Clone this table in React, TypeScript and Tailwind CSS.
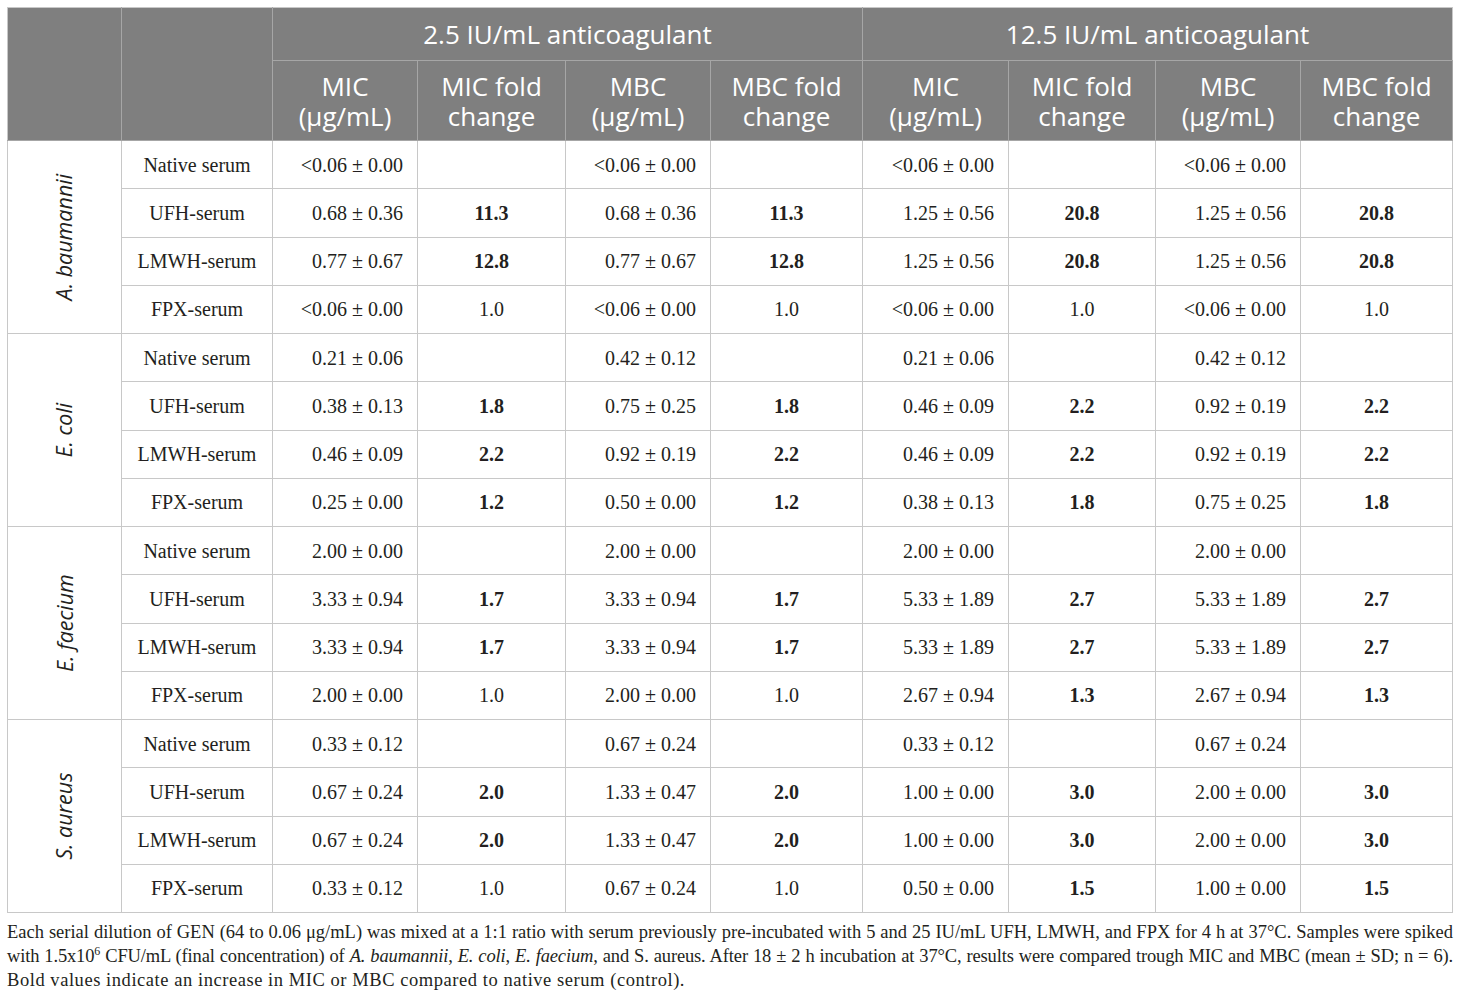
import React from "react"

type Row = { label: string; v: [string, string, string, string, string, string, string, string]; bold: boolean[] }

const GROUPS: { species: string; rows: Row[] }[] = [
  {
    species: "A. baumannii",
    rows: [
      { label: "Native serum", v: ["<0.06 ± 0.00", "", "<0.06 ± 0.00", "", "<0.06 ± 0.00", "", "<0.06 ± 0.00", ""], bold: [false, false, false, false] },
      { label: "UFH-serum", v: ["0.68 ± 0.36", "11.3", "0.68 ± 0.36", "11.3", "1.25 ± 0.56", "20.8", "1.25 ± 0.56", "20.8"], bold: [true, true, true, true] },
      { label: "LMWH-serum", v: ["0.77 ± 0.67", "12.8", "0.77 ± 0.67", "12.8", "1.25 ± 0.56", "20.8", "1.25 ± 0.56", "20.8"], bold: [true, true, true, true] },
      { label: "FPX-serum", v: ["<0.06 ± 0.00", "1.0", "<0.06 ± 0.00", "1.0", "<0.06 ± 0.00", "1.0", "<0.06 ± 0.00", "1.0"], bold: [false, false, false, false] },
    ],
  },
  {
    species: "E. coli",
    rows: [
      { label: "Native serum", v: ["0.21 ± 0.06", "", "0.42 ± 0.12", "", "0.21 ± 0.06", "", "0.42 ± 0.12", ""], bold: [false, false, false, false] },
      { label: "UFH-serum", v: ["0.38 ± 0.13", "1.8", "0.75 ± 0.25", "1.8", "0.46 ± 0.09", "2.2", "0.92 ± 0.19", "2.2"], bold: [true, true, true, true] },
      { label: "LMWH-serum", v: ["0.46 ± 0.09", "2.2", "0.92 ± 0.19", "2.2", "0.46 ± 0.09", "2.2", "0.92 ± 0.19", "2.2"], bold: [true, true, true, true] },
      { label: "FPX-serum", v: ["0.25 ± 0.00", "1.2", "0.50 ± 0.00", "1.2", "0.38 ± 0.13", "1.8", "0.75 ± 0.25", "1.8"], bold: [true, true, true, true] },
    ],
  },
  {
    species: "E. faecium",
    rows: [
      { label: "Native serum", v: ["2.00 ± 0.00", "", "2.00 ± 0.00", "", "2.00 ± 0.00", "", "2.00 ± 0.00", ""], bold: [false, false, false, false] },
      { label: "UFH-serum", v: ["3.33 ± 0.94", "1.7", "3.33 ± 0.94", "1.7", "5.33 ± 1.89", "2.7", "5.33 ± 1.89", "2.7"], bold: [true, true, true, true] },
      { label: "LMWH-serum", v: ["3.33 ± 0.94", "1.7", "3.33 ± 0.94", "1.7", "5.33 ± 1.89", "2.7", "5.33 ± 1.89", "2.7"], bold: [true, true, true, true] },
      { label: "FPX-serum", v: ["2.00 ± 0.00", "1.0", "2.00 ± 0.00", "1.0", "2.67 ± 0.94", "1.3", "2.67 ± 0.94", "1.3"], bold: [false, false, true, true] },
    ],
  },
  {
    species: "S. aureus",
    rows: [
      { label: "Native serum", v: ["0.33 ± 0.12", "", "0.67 ± 0.24", "", "0.33 ± 0.12", "", "0.67 ± 0.24", ""], bold: [false, false, false, false] },
      { label: "UFH-serum", v: ["0.67 ± 0.24", "2.0", "1.33 ± 0.47", "2.0", "1.00 ± 0.00", "3.0", "2.00 ± 0.00", "3.0"], bold: [true, true, true, true] },
      { label: "LMWH-serum", v: ["0.67 ± 0.24", "2.0", "1.33 ± 0.47", "2.0", "1.00 ± 0.00", "3.0", "2.00 ± 0.00", "3.0"], bold: [true, true, true, true] },
      { label: "FPX-serum", v: ["0.33 ± 0.12", "1.0", "0.67 ± 0.24", "1.0", "0.50 ± 0.00", "1.5", "1.00 ± 0.00", "1.5"], bold: [false, false, true, true] },
    ],
  },
]

const COLS = [114, 151, 145, 148, 145, 152, 146, 147, 145, 152]
const SUBHEADS = [
  ["MIC", "(μg/mL)"],
  ["MIC fold", "change"],
  ["MBC", "(μg/mL)"],
  ["MBC fold", "change"],
]

const sans = "font-['Open_Sans','Noto_Sans',sans-serif]"
const serif = "font-['Liberation_Serif','Times_New_Roman',serif]"

export default function App() {
  return (
    <div className="bg-white w-[1460px] h-[1000px] pt-[7px] px-[7px] text-[#231f20]">
      <table className="border-collapse table-fixed w-[1446px]">
        <colgroup>
          {COLS.map((w, i) => (
            <col key={i} style={{ width: w }} />
          ))}
        </colgroup>
        <thead className={`${sans} text-white bg-[#7f7f7f]`}>
          <tr className="h-[53px]">
            <th rowSpan={2} className="border border-[#a6a6a6] border-l-[#c8c8c8] border-t-[#c8c8c8]" />
            <th rowSpan={2} className="border border-[#a6a6a6] border-t-[#c8c8c8]" />
            <th colSpan={4} className="border border-[#a6a6a6] border-t-[#c8c8c8] font-normal text-[26px] leading-[30px]">
              2.5 IU/mL anticoagulant
            </th>
            <th colSpan={4} className="border border-[#a6a6a6] border-t-[#c8c8c8] border-r-[#c8c8c8] font-normal text-[26px] leading-[30px]">
              12.5 IU/mL anticoagulant
            </th>
          </tr>
          <tr className="h-[80px]">
            {[0, 1].flatMap((g) =>
              SUBHEADS.map((s, i) => (
                <th
                  key={`${g}-${i}`}
                  className="border border-[#a6a6a6] font-normal text-[26px] leading-[30px] align-middle whitespace-nowrap"
                >
                  {s[0]}
                  <br />
                  {s[1]}
                </th>
              ))
            )}
          </tr>
        </thead>
        <tbody className={`${serif} text-[20px]`}>
          {GROUPS.map((g) =>
            g.rows.map((r, ri) => (
              <tr key={g.species + r.label} className="h-[48.25px]">
                {ri === 0 && (
                  <td rowSpan={4} className="border border-[#c8c8c8] p-0">
                    <div className="flex items-center justify-center">
                      <span className={`${sans} italic text-[21.5px] whitespace-nowrap -rotate-90 inline-block`}>
                        {g.species}
                      </span>
                    </div>
                  </td>
                )}
                <td className="border border-[#c8c8c8] text-center whitespace-nowrap">{r.label}</td>
                {r.v.map((val, vi) => {
                  const isFold = vi % 2 === 1
                  const b = isFold && r.bold[(vi - 1) / 2]
                  return (
                    <td
                      key={vi}
                      className={`border border-[#c8c8c8] whitespace-nowrap ${isFold ? "text-center" : "text-right pr-[14px]"} ${b ? "font-bold" : ""}`}
                    >
                      {val}
                    </td>
                  )
                })}
              </tr>
            ))
          )}
        </tbody>
      </table>
      <div className={`${serif} text-[18.5px] leading-[24px] mt-[7px] text-[#231f20] w-[1446px]`}>
        <p className="text-justify [text-align-last:justify] whitespace-nowrap">
          Each serial dilution of GEN (64 to 0.06 μg/mL) was mixed at a 1:1 ratio with serum previously pre-incubated with 5 and 25 IU/mL UFH, LMWH, and FPX for 4 h at 37°C. Samples were spiked
        </p>
        <p className="text-justify [text-align-last:justify] whitespace-nowrap tracking-[-0.15px]">
          with 1.5x10<sup className="text-[12px] relative -top-[7px] leading-none align-baseline">6</sup> CFU/mL (final concentration) of <i>A. baumannii</i>, <i>E. coli</i>, <i>E. faecium</i>, and S. aureus. After 18 ± 2 h incubation at 37°C, results were compared trough MIC and MBC (mean ± SD; n = 6).
        </p>
        <p className="whitespace-nowrap tracking-[0.55px]">
          Bold values indicate an increase in MIC or MBC compared to native serum (control).
        </p>
      </div>
    </div>
  )
}
